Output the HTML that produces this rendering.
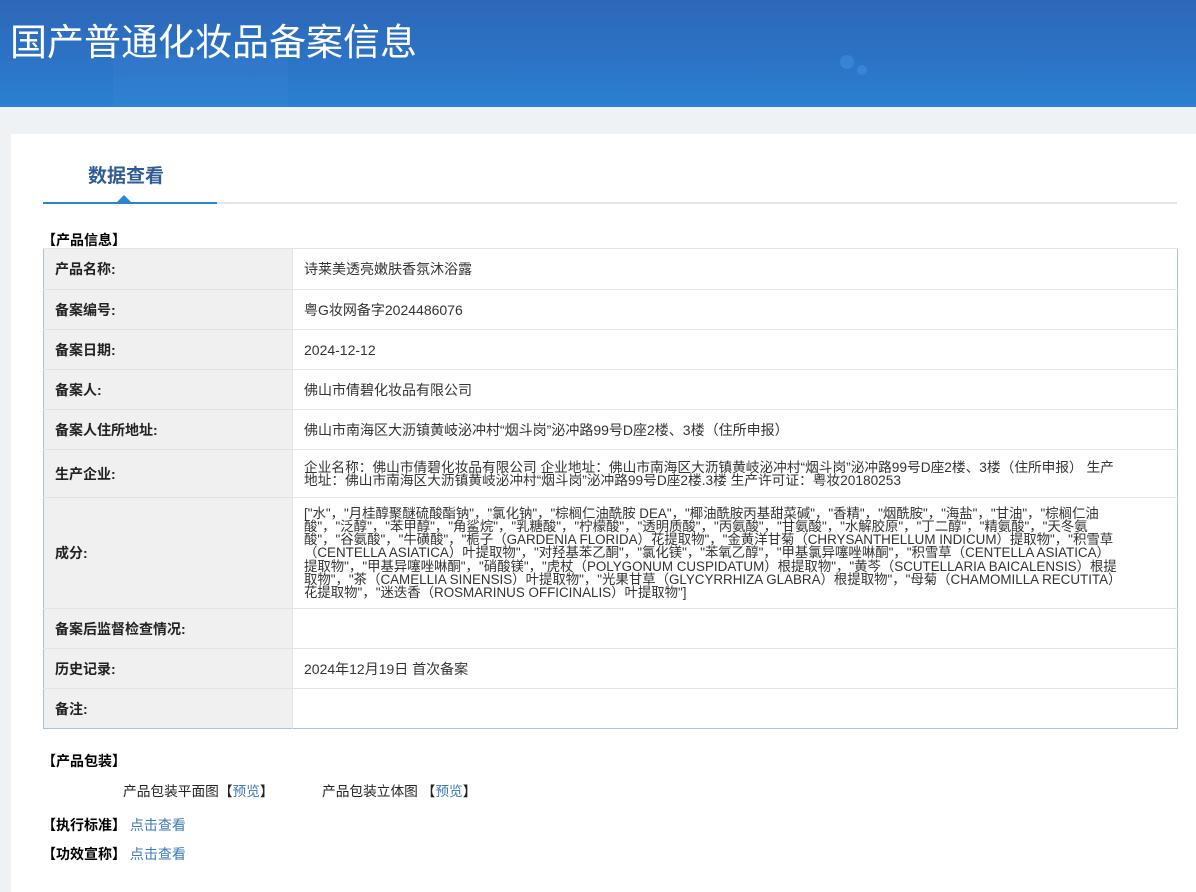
<!DOCTYPE html>
<html><head><meta charset="utf-8"><style>
*{margin:0;padding:0;box-sizing:border-box}
body{width:1196px;height:892px;overflow:hidden;background:#eef2f5;font-family:"Liberation Sans","Noto Sans CJK SC",sans-serif;color:#333}
.hd{height:107px;background:linear-gradient(180deg,#2d67b8 0%,#2c74c6 60%,#2a80d2 100%);position:relative;overflow:hidden}
.hd h1{position:absolute;left:10px;top:12px;font-size:37px;font-weight:normal;color:#fff}
.hd .b1{position:absolute;left:113px;top:55px;width:175px;height:60px;background:rgba(90,150,230,.12)}
.hd .c1{position:absolute;left:840px;top:55px;width:14px;height:14px;border-radius:50%;background:rgba(80,160,240,.35)}
.hd .c2{position:absolute;left:857px;top:65px;width:10px;height:10px;border-radius:50%;background:rgba(80,160,240,.35)}
.card{position:absolute;left:11px;top:134px;width:1185px;height:758px;background:#fff}
.tab{position:absolute;left:88px;top:161px;font-size:19px;font-weight:bold;color:#2e5d94}
.line{position:absolute;left:43px;top:202px;width:1134px;height:2px;background:#e6e6e6}
.line2{position:absolute;left:43px;top:202px;width:174px;height:2px;background:#2a86d1}
.tri{position:absolute;left:117px;top:195px;width:0;height:0;border-left:7px solid transparent;border-right:7px solid transparent;border-bottom:7px solid #2a86d1}
.sec{position:absolute;font-size:14px;font-weight:bold;color:#000}
table{position:absolute;left:43px;top:248px;width:1135px;border-collapse:collapse;border:1px solid #a9c1de;font-size:14px}
td{border-top:1px solid #e3e3e3;vertical-align:middle}
td.l{width:249px;background:#f0f0f0;font-weight:bold;color:#222;padding-left:11px;border-right:1px solid #e3e3e3}
td.v{padding-left:11px;color:#333}
.ing{line-height:13.2px;font-size:13.4px;white-space:nowrap}
.t{position:absolute;font-size:13.7px;color:#222}
a{color:#3d7ab8;text-decoration:none}
</style></head><body>
<div class="hd"><div class="b1"></div><div class="c1"></div><div class="c2"></div><h1>国产普通化妆品备案信息</h1></div>
<div class="card"></div>
<div class="tab">数据查看</div>
<div class="line"></div><div class="line2"></div><div class="tri"></div>
<div class="sec" style="left:42px;top:230px">【产品信息】</div>
<table>
<tr style="height:41px"><td class="l">产品名称:</td><td class="v">诗莱美透亮嫩肤香氛沐浴露</td></tr>
<tr style="height:40px"><td class="l">备案编号:</td><td class="v">粤G妆网备字2024486076</td></tr>
<tr style="height:40px"><td class="l">备案日期:</td><td class="v">2024-12-12</td></tr>
<tr style="height:40px"><td class="l">备案人:</td><td class="v">佛山市倩碧化妆品有限公司</td></tr>
<tr style="height:40px"><td class="l">备案人住所地址:</td><td class="v">佛山市南海区大沥镇黄岐泌冲村“烟斗岗”泌冲路99号D座2楼、3楼（住所申报）</td></tr>
<tr style="height:48px"><td class="l">生产企业:</td><td class="v" style="line-height:13px;font-size:13.7px;white-space:nowrap">企业名称：佛山市倩碧化妆品有限公司 企业地址：佛山市南海区大沥镇黄岐泌冲村“烟斗岗”泌冲路99号D座2楼、3楼（住所申报） 生产<br>地址：佛山市南海区大沥镇黄岐泌冲村“烟斗岗”泌冲路99号D座2楼.3楼 生产许可证：粤妆20180253</td></tr>
<tr style="height:111px"><td class="l">成分:</td><td class="v ing">["水"，"月桂醇聚醚硫酸酯钠"，"氯化钠"，"棕榈仁油酰胺 DEA"，"椰油酰胺丙基甜菜碱"，"香精"，"烟酰胺"，"海盐"，"甘油"，"棕榈仁油<br>酸"，"泛醇"，"苯甲醇"，"角鲨烷"，"乳糖酸"，"柠檬酸"，"透明质酸"，"丙氨酸"，"甘氨酸"，"水解胶原"，"丁二醇"，"精氨酸"，"天冬氨<br>酸"，"谷氨酸"，"牛磺酸"，"栀子（GARDENIA FLORIDA）花提取物"，"金黄洋甘菊（CHRYSANTHELLUM INDICUM）提取物"，"积雪草<br>（CENTELLA ASIATICA）叶提取物"，"对羟基苯乙酮"，"氯化镁"，"苯氧乙醇"，"甲基氯异噻唑啉酮"，"积雪草（CENTELLA ASIATICA）<br>提取物"，"甲基异噻唑啉酮"，"硝酸镁"，"虎杖（POLYGONUM CUSPIDATUM）根提取物"，"黄芩（SCUTELLARIA BAICALENSIS）根提<br>取物"，"茶（CAMELLIA SINENSIS）叶提取物"，"光果甘草（GLYCYRRHIZA GLABRA）根提取物"，"母菊（CHAMOMILLA RECUTITA）<br>花提取物"，"迷迭香（ROSMARINUS OFFICINALIS）叶提取物"]</td></tr>
<tr style="height:40px"><td class="l">备案后监督检查情况:</td><td class="v"></td></tr>
<tr style="height:40px"><td class="l">历史记录:</td><td class="v">2024年12月19日 首次备案</td></tr>
<tr style="height:40px"><td class="l">备注:</td><td class="v"></td></tr>
</table>
<div class="sec" style="left:42px;top:751px">【产品包装】</div>
<div class="t" style="left:123px;top:780px">产品包装平面图【<a>预览</a>】</div>
<div class="t" style="left:322px;top:780px">产品包装立体图 【<a>预览</a>】</div>
<div class="sec" style="left:42px;top:815px">【执行标准】 <a style="font-weight:normal">点击查看</a></div>
<div class="sec" style="left:42px;top:844px">【功效宣称】 <a style="font-weight:normal">点击查看</a></div>
</body></html>
